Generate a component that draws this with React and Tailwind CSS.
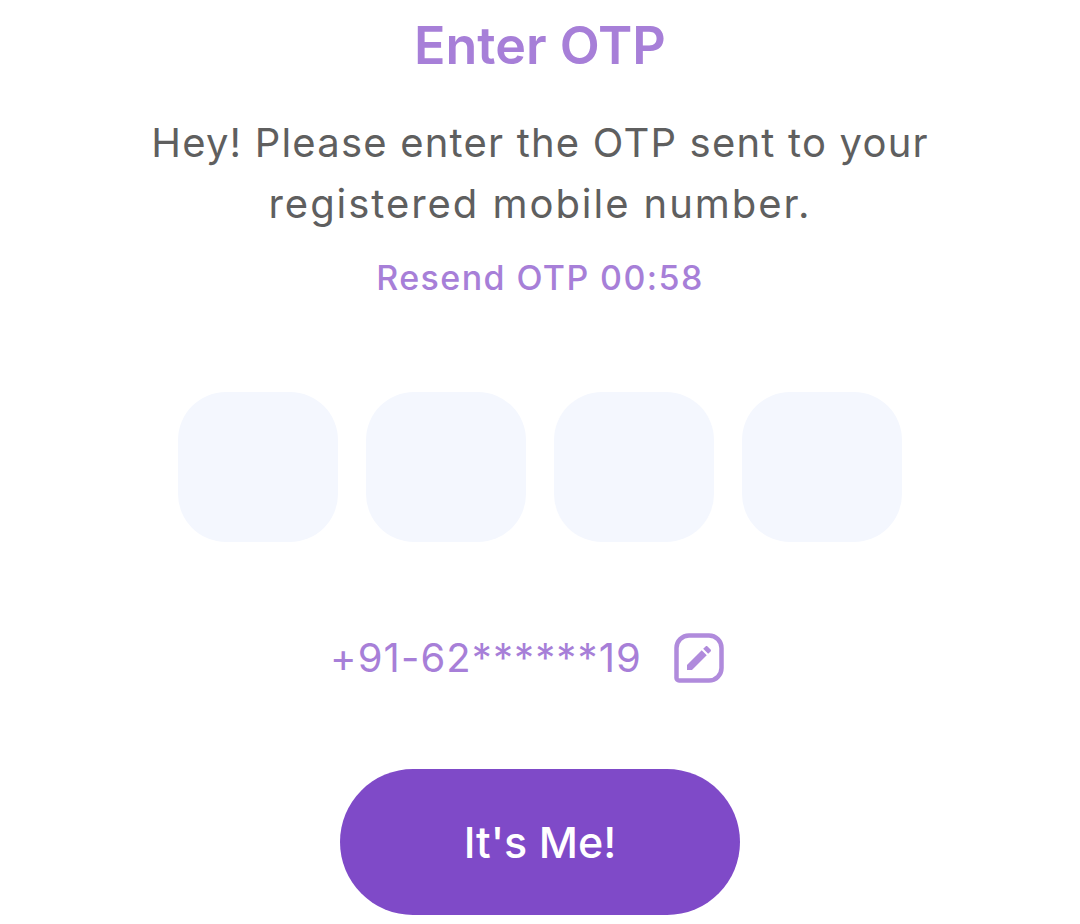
const slots = [0, 1, 2, 3];
const font = "font-['Inter','Noto_Sans',sans-serif]";

function EditIcon() {
  return (
    <svg width="50" height="50" viewBox="0 0 50 50" className="shrink-0 text-[#b08bdc]">
      <path
        d="M15 2.5H35A12.5 12.5 0 0 1 47.5 15V35A12.5 12.5 0 0 1 35 47.5H5A2.5 2.5 0 0 1 2.5 45V15A12.5 12.5 0 0 1 15 2.5Z"
        fill="none"
        stroke="currentColor"
        strokeWidth="4.5"
      />
      <g transform="translate(9 9) scale(1.333)">
        <path
          fill="currentColor"
          d="M3 17.25V21h3.75L17.81 9.94l-3.75-3.75L3 17.25zM20.71 7.04c.39-.39.39-1.02 0-1.41l-2.34-2.34c-.39-.39-1.02-.39-1.41 0l-1.83 1.83 3.75 3.75 1.83-1.83z"
        />
      </g>
    </svg>
  );
}

export default function App() {
  return (
    <div className={`w-[1080px] h-[924px] bg-white flex flex-col items-center overflow-hidden ${font}`}>
      <h1 className="mt-[16px] text-[52px] leading-[60px] font-semibold text-[#a77fd8]">Enter OTP</h1>
      <p className="mt-[36px] w-[800px] text-center text-[40px] leading-[61px] text-[#5f5f5f]">
        <span className="block tracking-[1.2px]">Hey! Please enter the OTP sent to your</span>
        <span className="block tracking-[1.95px]">registered mobile number.</span>
      </p>
      <div className="mt-[22px] text-[34px] tracking-[1.4px] leading-[44px] font-medium text-[#a77fd8]">Resend OTP 00:58</div>
      <div className="mt-[92px] flex gap-[28px]">
        {slots.map((s) => (
          <div key={s} className="w-[160px] h-[150px] rounded-[48px] bg-[#f4f7fe]" />
        ))}
      </div>
      <div className="mt-[88px] pr-[26px] flex items-center gap-[32px]">
        <span className="text-[40px] tracking-[1.1px] leading-[56px] text-[#a77fd8]">+91-62******19</span>
        <EditIcon />
      </div>
      <button className="mt-[83px] w-[400px] h-[146px] rounded-full bg-[#7f4ac8] text-white text-[43px] font-medium">
        It's Me!
      </button>
    </div>
  );
}
